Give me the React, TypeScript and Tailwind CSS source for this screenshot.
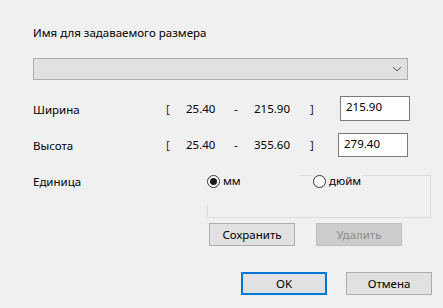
import { useState } from 'react';

const font = { fontFamily: '"Noto Sans", "DejaVu Sans", sans-serif' };

function Radio({ checked, label, onClick }: { checked: boolean; label: string; onClick: () => void }) {
  return (
    <button type="button" onClick={onClick} className="flex items-center gap-[3px] h-4 bg-[#f0f0f0] pr-[2px]">
      <span className="w-[13px] h-[13px] rounded-full border border-[#333333] bg-white flex items-center justify-center">
        {checked && <span className="w-[7px] h-[7px] rounded-full bg-[#1a1a1a]" />}
      </span>
      <span className="leading-4">{label}</span>
    </button>
  );
}

function RangeRow({ label, min, max, value, boxClass }: { label: string; min: string; max: string; value: string; boxClass: string }) {
  return (
    <div className="flex items-center">
      <span className="w-[133px] pt-[2px]">{label}</span>
      <span className="w-[20px] text-[#5c1a10]">[</span>
      <span className="w-[48px]">{min}</span>
      <span className="w-[20px]">-</span>
      <span className="w-[56px]">{max}</span>
      <span className="w-[28px] text-[#1a1a40]">]</span>
      <div className={boxClass}>
        <input
          className="w-full h-full bg-white px-[5px] pb-[4px] outline-none text-[11.5px] text-black"
          defaultValue={value}
          style={font}
        />
      </div>
    </div>
  );
}

export default function App() {
  const [unit, setUnit] = useState<'mm' | 'inch'>('mm');

  return (
    <div className="w-[443px] h-[308px] bg-[#f0f0f0] text-[11.5px] text-black pl-[33px] pt-[25px]" style={font}>
      {/* Name */}
      <div className="leading-4">Имя для задаваемого размера</div>
      <div className="mt-[17px] w-[375px] h-[22px] bg-[#e1e1e1] border border-[#adadad] flex items-center justify-end pr-[5px]">
        <svg width="10" height="6" viewBox="0 0 10 6" className="text-[#555555]">
          <path d="M1 1 L5 5 L9 1" fill="none" stroke="currentColor" strokeWidth="1" />
        </svg>
      </div>

      {/* Ranges */}
      <div className="mt-[16px]">
        <RangeRow label="Ширина" min="25.40" max="215.90" value="215.90" boxClass="ml-[2px] w-[70px] h-[25px] border border-[#7a7a7a]" />
      </div>
      <div className="mt-[12px]">
        <RangeRow label="Высота" min="25.40" max="355.60" value="279.40" boxClass="w-[70px] h-[24px] border border-[#7a7a7a]" />
      </div>

      {/* Unit */}
      <div className="mt-[18px] flex">
        <span className="w-[174px] leading-4 -mt-[1px]">Единица</span>
        <div className="relative w-[224px] h-[43px] border-r border-b border-[#dcdcdc]">
          <div className="absolute left-[93px] right-0 top-0 border-t border-[#dcdcdc]" />
          <div className="absolute left-0 bottom-0 h-[12px] border-l border-[#dcdcdc]" />
          <div className="relative flex -mt-[2px]">
            <div className="w-[106px]">
              <Radio checked={unit === 'mm'} label="мм" onClick={() => setUnit('mm')} />
            </div>
            <Radio checked={unit === 'inch'} label="дюйм" onClick={() => setUnit('inch')} />
          </div>
        </div>
      </div>

      {/* Save / delete */}
      <div className="mt-[5px] ml-[176px] flex gap-[21px]">
        <button type="button" className="w-[86px] h-[23px] bg-[#e1e1e1] border border-[#adadad]">
          Сохранить
        </button>
        <button type="button" disabled className="w-[86px] h-[23px] bg-[#cccccc] border border-[#bfbfbf] text-[#8c8c8c]">
          Удалить
        </button>
      </div>

      {/* Dialog buttons */}
      <div className="mt-[26px] ml-[208px] flex gap-[19px]">
        <button type="button" className="w-[86px] h-[23px] bg-[#e1e1e1] border-2 border-[#0078d7]">
          OK
        </button>
        <button type="button" className="w-[86px] h-[23px] bg-[#e1e1e1] border border-[#adadad]">
          Отмена
        </button>
      </div>
    </div>
  );
}
